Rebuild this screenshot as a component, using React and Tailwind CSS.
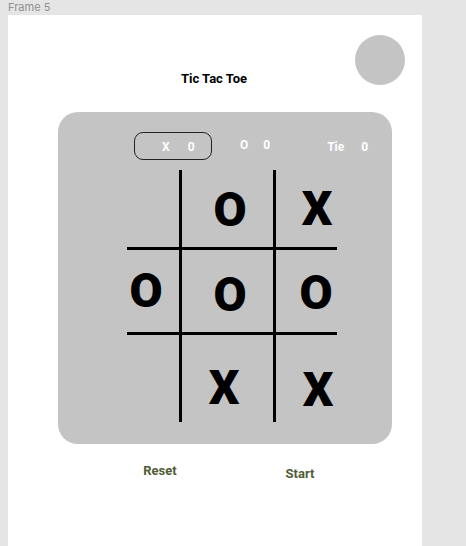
import { useState } from "react";

// board cells: letter + manual offsets so glyphs sit where the mock has them
const cells = [
  { v: "", cls: "border-r-[3px] border-b-[3px]" },
  { v: "O", cls: "border-r-[3px] border-b-[3px]", pos: "ml-[30px] mt-[16px]" },
  { v: "X", cls: "border-b-[3px]", pos: "ml-[23px] mt-[15px]" },
  { v: "O", cls: "border-r-[3px] border-b-[3px]", pos: "ml-[1px] mt-[17px]" },
  { v: "O", cls: "border-r-[3px] border-b-[3px]", pos: "ml-[30px] mt-[21px]" },
  { v: "O", cls: "border-b-[3px]", pos: "ml-[22px] mt-[19px]" },
  { v: "", cls: "border-r-[3px]" },
  { v: "X", cls: "border-r-[3px]", pos: "ml-[24px] mt-[29px]" },
  { v: "X", cls: "", pos: "ml-[24px] mt-[31px]" },
];

const App = () => {
  const [board] = useState(cells);

  return (
    <div className="w-[466px] h-[546px] bg-[#e5e5e5] overflow-hidden font-['Roboto',sans-serif]">
      <div className="h-[15px] pl-2 text-[11px] leading-[15px] text-[#8f8f8f] font-['Inter',sans-serif]">
        Frame 5
      </div>

      <div className="ml-2 w-[414px] h-[531px] bg-white">
        {/* Header */}
        <div className="grid grid-cols-[1fr_auto_1fr] h-[70px] pt-5 pr-[17px]">
          <div />
          <h1 className="mt-[36px] ml-[15px] text-[13px] leading-4 font-bold text-black">
            Tic Tac Toe
          </h1>
          <div className="flex justify-end">
            <div className="size-[50px] rounded-full bg-[#c4c4c4]" />
          </div>
        </div>

        {/* Game panel */}
        <div className="mt-[27px] ml-[50px] w-[334px] h-[332px] rounded-[20px] bg-[#c4c4c4]">
          {/* Scores */}
          <div className="flex items-center pt-5 pl-[76px] text-[12px] font-bold text-white">
            <div className="w-[78px] h-[28px] border border-[#222] rounded-[9px] flex items-center pl-[27px] gap-[18px] pt-[1px]">
              <span>X</span>
              <span>0</span>
            </div>
            <div className="ml-[28px] flex gap-[15px] mb-[3px]">
              <span>O</span>
              <span>0</span>
            </div>
            <div className="ml-[57px] flex gap-[17px] pt-[1px]">
              <span>Tie</span>
              <span>0</span>
            </div>
          </div>

          {/* Board */}
          <div className="mt-[10px] ml-[69px] grid grid-cols-[55px_94px_61px] grid-rows-[80px_85px_87px] w-[210px]">
            {board.map((c, i) => (
              <div key={i} className={`border-black flex items-start ${c.cls}`}>
                {c.v && (
                  <span className={`block w-[36px] text-center text-[48px] leading-[48px] font-black text-black ${c.pos}`}>
                    {c.v}
                  </span>
                )}
              </div>
            ))}
          </div>
        </div>

        {/* Actions */}
        <div className="flex items-start mt-[19px] pl-[122px] gap-[80px] text-[13px] leading-4 font-bold text-[#505c35]">
          <button className="w-[60px] text-center cursor-pointer">Reset</button>
          <button className="w-[60px] text-center mt-[3px] cursor-pointer">Start</button>
        </div>
      </div>
    </div>
  );
};

export default App;
